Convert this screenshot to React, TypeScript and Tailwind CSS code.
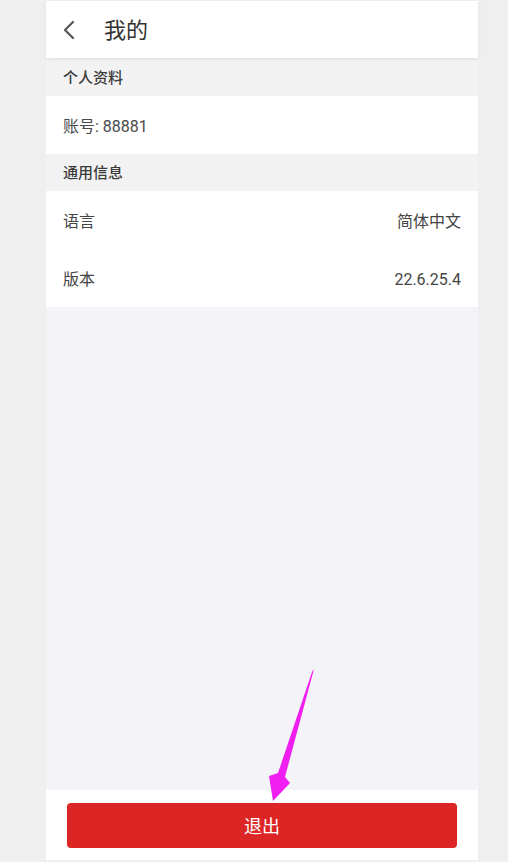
import React from "react";

const font = { fontFamily: 'Roboto, "Noto Sans CJK SC", "Noto Sans", sans-serif' };

export default function App() {
  return (
    <div className="relative w-[508px] h-[862px] bg-[#efefef] pt-[1px] pb-[2px] pl-[46px]" style={font}>
      <div className="w-[432px] h-full flex flex-col bg-[#f4f4f8]">
        <div className="h-[57px] bg-white flex items-center shadow-[0_1px_3px_rgba(0,0,0,0.08)] z-10">
          <svg className="ml-[16px]" width="14" height="20" viewBox="0 0 14 20" fill="none">
            <path d="M11 2 L3 10 L11 18" stroke="#555" strokeWidth="2.2" strokeLinecap="round" strokeLinejoin="round" />
          </svg>
          <span className="ml-[28px] pt-[2px] text-[22px] text-[#333] leading-none">我的</span>
        </div>
        <div className="h-[38px] bg-[#f2f2f2] flex items-center pt-[2px] px-[17px] text-[15px] font-medium text-[#3a3a3a]">个人资料</div>
        <div className="h-[58px] bg-white flex items-center pt-[3px] px-[17px] text-[16px] text-[#4a4a4a]">账号: 88881</div>
        <div className="h-[37px] bg-[#f2f2f2] flex items-center pt-[2px] px-[17px] text-[15px] font-medium text-[#3a3a3a]">通用信息</div>
        <div className="h-[59px] bg-white flex items-center justify-between pt-[2px] px-[17px] text-[16px] text-[#444]">
          <span>语言</span>
          <span>简体中文</span>
        </div>
        <div className="h-[57px] bg-white flex items-center justify-between pt-[2px] px-[17px] text-[16px] text-[#444]">
          <span>版本</span>
          <span>22.6.25.4</span>
        </div>
        <div className="flex-1" />
        <div className="h-[70px] bg-white pt-[13px] px-[21px]">
          <button className="w-full h-[45px] pt-[2px] rounded-[4px] bg-[#dc2626] text-white text-[18px] flex items-center justify-center">退出</button>
        </div>
      </div>
      <svg className="absolute left-0 top-0 pointer-events-none" width="508" height="862" viewBox="0 0 508 862">
        <polygon points="314,669 285,777 290,783 273,801 269,776 278,773 312,672" fill="#f01ef0" />
      </svg>
    </div>
  );
}
